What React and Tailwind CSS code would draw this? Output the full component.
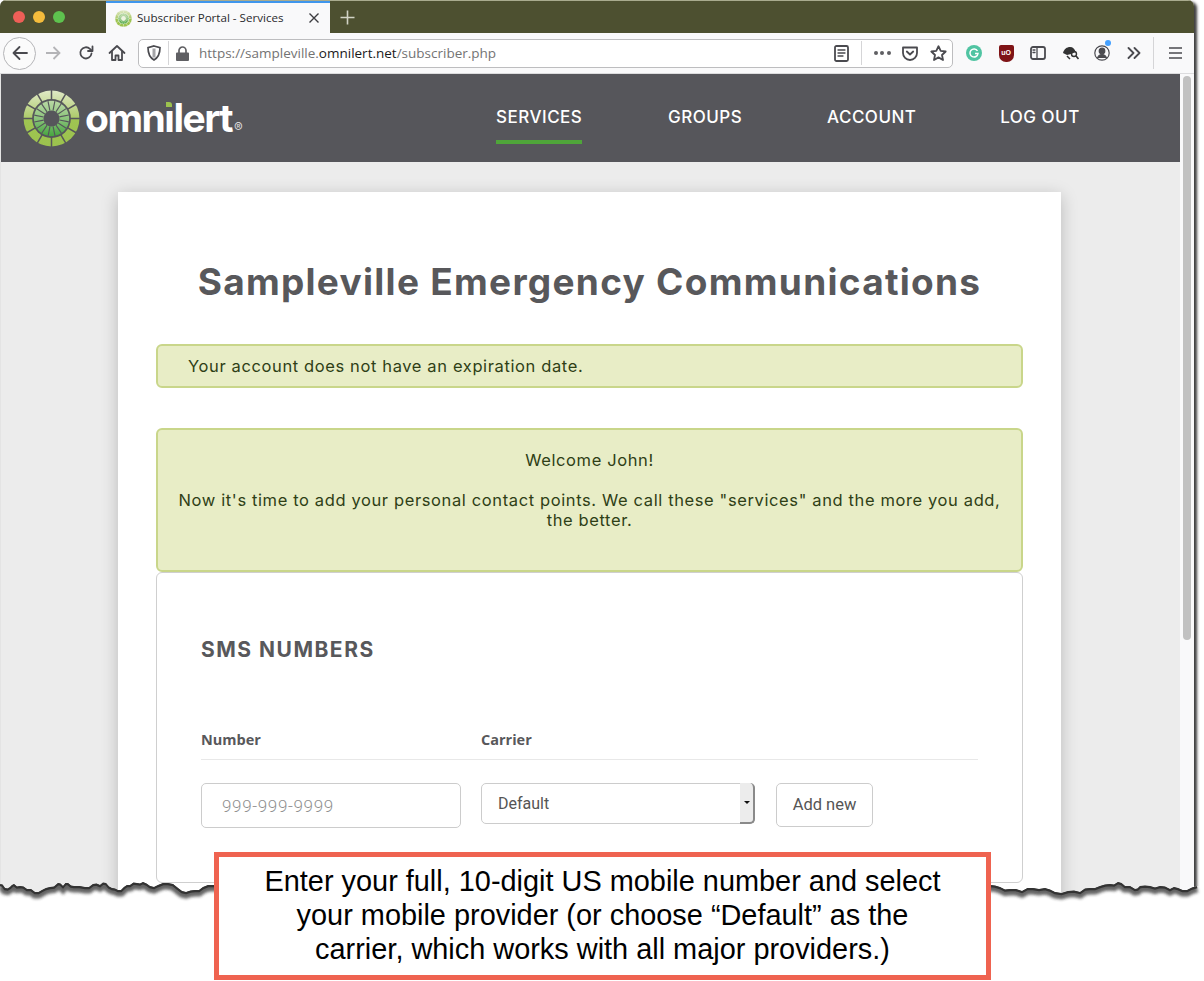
import React from 'react';

const TORN = [
  [0, 884], [5, 888], [10, 887], [14, 884], [20, 886], [27, 889], [35, 892], [42, 890], [50, 887], [58, 883],
  [63, 886], [68, 883], [74, 886], [85, 887], [93, 884], [100, 885], [106, 883], [112, 888], [118, 890],
  [124, 887], [130, 885], [137, 883], [143, 882], [150, 886], [158, 885], [168, 883], [178, 888], [186, 892],
  [195, 890], [203, 887], [213, 885], [600, 885], [990, 885], [1000, 887], [1010, 889], [1022, 891], [1033, 888],
  [1045, 888], [1055, 892], [1068, 891], [1080, 892], [1090, 888], [1100, 886], [1110, 884], [1118, 882],
  [1125, 886], [1135, 889], [1140, 886], [1150, 886], [1160, 886], [1170, 889], [1178, 888], [1187, 890], [1197, 886],
];
// small notches between the main points so the edge looks ripped
const JAG = [-1.5, 1, -0.5, 1.5, -1];
const tornLine = TORN.flatMap((p, i) => {
  const next = TORN[i + 1];
  if (!next || next[0] - p[0] > 30) return [p.join(',')];
  return [p.join(','), `${(p[0] + next[0]) / 2},${(p[1] + next[1]) / 2 + JAG[i % 5]}`];
}).join(' ');

const spokes = (n, r1, r2, offset = 0) =>
  Array.from({ length: n }, (_, i) => {
    const a = ((i * 360) / n + offset) * (Math.PI / 180);
    return [50 + r1 * Math.cos(a), 50 + r1 * Math.sin(a), 50 + r2 * Math.cos(a), 50 + r2 * Math.sin(a)];
  });

function LogoMark({ size, line = '#56565b', id = 'a' }) {
  return (
    <svg width={size} height={size} viewBox="0 0 100 100">
      <defs>
        <linearGradient id={`outer-${id}`} x1="0" y1="0" x2="0" y2="1">
          <stop offset="0" stopColor="#e0e9c6" />
          <stop offset="0.48" stopColor="#aecb6c" />
          <stop offset="0.52" stopColor="#9fc552" />
          <stop offset="1" stopColor="#9cc24e" />
        </linearGradient>
        <linearGradient id={`inner-${id}`} x1="0" y1="0" x2="0" y2="1">
          <stop offset="0" stopColor="#b9d8a4" />
          <stop offset="0.5" stopColor="#8cc47c" />
          <stop offset="1" stopColor="#46a53f" />
        </linearGradient>
      </defs>
      <circle cx="50" cy="50" r="49" fill={`url(#outer-${id})`} />
      <circle cx="50" cy="50" r="34" fill={line} />
      <circle cx="50" cy="50" r="31" fill={`url(#inner-${id})`} />
      {spokes(12, 32, 50, 0).map((s, i) => (
        <line key={i} x1={s[0]} y1={s[1]} x2={s[2]} y2={s[3]} stroke={line} strokeWidth="2.6" />
      ))}
      {spokes(16, 14, 31, 11).map((s, i) => (
        <line key={i} x1={s[0]} y1={s[1]} x2={s[2]} y2={s[3]} stroke={line} strokeWidth="2" />
      ))}
      <circle cx="50" cy="50" r="14" fill={line} />
    </svg>
  );
}

function Icon({ children, w = 18, h = 18, box = '0 0 18 18' }) {
  return (
    <svg width={w} height={h} viewBox={box} fill="none" stroke="#4a4a4f" strokeWidth="1.8" strokeLinecap="round" strokeLinejoin="round">
      {children}
    </svg>
  );
}

function BrowserChrome() {
  return (
    <>
      <div className="flex h-[33px] items-stretch border-t border-[#a9ab8e] bg-[#4d5030]">
        <div className="flex w-[106px] items-center gap-2 pl-[13px]">
          <span className="h-3 w-3 rounded-full bg-[#ee5f57]" />
          <span className="h-3 w-3 rounded-full bg-[#f4bc3c]" />
          <span className="h-3 w-3 rounded-full bg-[#5ec24e]" />
        </div>
        <div className="flex w-[224px] items-center border-t-2 border-[#3f96ec] bg-[#f9f9fa] pl-[9px]">
          <LogoMark size={17} line="#eef3e0" id="fav" />
          <span className="ml-[5px] w-[171px] whitespace-nowrap font-['Open_Sans',sans-serif] text-[11.6px] text-[#2a2a2e]">Subscriber Portal - Services</span>
          <svg width="12" height="12" viewBox="0 0 12 12" stroke="#3c3c40" strokeWidth="1.4">
            <path d="M1.5 1.5l9 9M10.5 1.5l-9 9" />
          </svg>
        </div>
        <div className="flex items-center pl-[10px]">
          <svg width="15" height="15" viewBox="0 0 15 15" stroke="#d2d3c5" strokeWidth="1.6">
            <path d="M7.5 0.5v14M0.5 7.5h14" />
          </svg>
        </div>
      </div>

      <div className="flex h-[41px] items-center border-b border-[#dcdcde] bg-[#f9f9fa]">
        <div className="ml-[3px] flex h-[33px] w-[33px] items-center justify-center rounded-full border border-[#b5b5b8] bg-[#fbfbfb]">
          <Icon>
            <path d="M16 9H2.5M8.5 3L2.5 9l6 6" />
          </Icon>
        </div>
        <div className="flex w-[34px] justify-center">
          <svg width="18" height="18" viewBox="0 0 18 18" fill="none" stroke="#b4b4b7" strokeWidth="1.8">
            <path d="M2 9h13.5M9.5 3l6 6-6 6" />
          </svg>
        </div>
        <div className="flex w-[32px] justify-center">
          <Icon>
            <path d="M14.5 9.5a5.6 5.6 0 1 1-1.6-4.6L15 7" />
            <path d="M15.5 2.5V7H11" />
          </Icon>
        </div>
        <div className="flex w-[30px] justify-center">
          <Icon>
            <path d="M1.5 9L9 2l7.5 7" />
            <path d="M4 7.5V16h3.5v-4.5h3V16H14V7.5" />
          </Icon>
        </div>
        <div className="ml-[6px] flex h-[29px] w-[815px] items-center rounded-[5px] border border-[#bdbdbf] bg-white">
          <div className="flex w-[29px] justify-center">
            <svg width="14" height="16" viewBox="0 0 14 16" fill="none" stroke="#4a4a4f" strokeWidth="1.7">
              <path d="M7 1l6 1.6c0 6-1.5 10-6 12.4C2.500 12.600 1 8.600 1 2.600z" />
              <path d="M7 3.500v9" strokeWidth="3" stroke="#4a4a4f" opacity="0.5" />
            </svg>
          </div>
          <div className="h-[24px] w-px bg-[#d5d5d7]" />
          <div className="flex w-[27px] justify-center">
            <svg width="13" height="15" viewBox="0 0 13 15" fill="#5f5f63">
              <path d="M1 6.500h11a1 1 0 0 1 1 1V14a1 1 0 0 1-1 1H1a1 1 0 0 1-1-1V7.500a1 1 0 0 1 1-1z" />
              <path d="M3 7V4.500a3.500 3.500 0 0 1 7 0V7" fill="none" stroke="#5f5f63" strokeWidth="1.700" />
            </svg>
          </div>
          <div className="w-[629px] whitespace-nowrap pl-[3px] font-['Open_Sans',sans-serif] text-[13.5px] text-[#737373]">
            https://sampleville.<span className="text-[#1a1a1a]">omnilert.net</span>/subscriber.php
          </div>
          <div className="mr-[4px] flex w-[32px] justify-center">
            <Icon w={15} h={17} box="0 0 15 17">
              <rect x="1" y="1" width="13" height="15" rx="1.500" />
              <path d="M4 5h7M4 8h7M4 11h5" strokeWidth="1.300" />
            </Icon>
          </div>
          <div className="h-[24px] w-px bg-[#d5d5d7]" />
          <div className="flex w-[40px] justify-center gap-[2.500px]">
            <span className="h-[4px] w-[4px] rounded-full bg-[#5f5f63]" />
            <span className="h-[4px] w-[4px] rounded-full bg-[#5f5f63]" />
            <span className="h-[4px] w-[4px] rounded-full bg-[#5f5f63]" />
          </div>
          <div className="flex w-[16px] justify-center">
            <Icon w={16} h={15} box="0 0 16 15">
              <path d="M1 1.500h14V7a7 7 0 0 1-14 0z" />
              <path d="M4.800 5.500L8 8.500l3.200-3" />
            </Icon>
          </div>
          <div className="ml-[6px] flex w-[28px] justify-center">
            <Icon w={17} h={16} box="0 0 17 16">
              <path d="M8.500 1.200l2.200 4.700 5 .6-3.700 3.500 1 5-4.500-2.600L4 15l1-5L1.300 6.500l5-.6z" />
            </Icon>
          </div>
        </div>

        <div className="ml-[5px] flex w-[32px] justify-center">
          <span className="flex h-[16px] w-[16px] items-center justify-center rounded-full bg-[#50c4a2]">
            <svg width="10" height="10" viewBox="0 0 10 10" fill="none" stroke="#fff" strokeWidth="1.500">
              <path d="M8.500 3A4 4 0 1 0 9 5.500H6" />
            </svg>
          </span>
        </div>
        <div className="flex w-[32px] justify-center">
          <span className="flex h-[17px] w-[15px] items-center justify-center rounded-b-[7px] rounded-t-[2px] bg-[#7f1416] font-['Liberation_Sans',sans-serif] text-[7px] font-bold text-white">
            uO
          </span>
        </div>
        <div className="flex w-[32px] justify-center">
          <Icon w={16} h={14} box="0 0 16 14">
            <rect x="1" y="1" width="14" height="12" rx="2" />
            <path d="M7 1v12M3 4h2M3 6.500h2" strokeWidth="1.300" />
          </Icon>
        </div>
        <div className="flex w-[32px] justify-center">
          <svg width="17" height="14" viewBox="0 0 17 14" fill="#333">
            <path d="M1 7c1-4 4-6 7-6s5 2 5.500 5L9 8 5 9z" />
            <circle cx="12" cy="8" r="2.500" fill="none" stroke="#333" strokeWidth="1.400" />
            <path d="M14 10l2.500 3" stroke="#333" strokeWidth="1.600" />
            <path d="M5 10l3 3" stroke="#333" strokeWidth="1.500" />
          </svg>
        </div>
        <div className="relative flex w-[32px] justify-center">
          <svg width="16" height="16" viewBox="0 0 16 16" fill="none" stroke="#4a4a4f" strokeWidth="1.200">
            <circle cx="8" cy="8" r="7.200" />
            <circle cx="8" cy="6" r="2.800" fill="#4a4a4f" />
            <path d="M3.500 13c.8-2.500 2.500-3.500 4.500-3.500s3.700 1 4.500 3.500" fill="#4a4a4f" />
          </svg>
          <span className="absolute left-[19px] top-[-5px] h-[6px] w-[6px] rounded-full bg-[#45a1ff]" />
        </div>
        <div className="flex w-[32px] justify-center">
          <Icon w={14} h={12} box="0 0 14 12">
            <path d="M1.500 1l5 5-5 5M7.500 1l5 5-5 5" />
          </Icon>
        </div>
        <div className="ml-[3px] h-[32px] w-px bg-[#d5d5d7]" />
        <div className="flex w-[39px] justify-center pl-[3px]">
          <svg width="13" height="12" viewBox="0 0 13 12" stroke="#4a4a4f" strokeWidth="1.700">
            <path d="M0 1h13M0 6h13M0 11h13" />
          </svg>
        </div>
      </div>
    </>
  );
}

function SiteHeader() {
  const navItem = "relative font-['Inter',sans-serif] text-[17px] font-medium tracking-[0.5px] text-white";
  return (
    <div className="flex h-[88px] items-center bg-[#56565b]">
      <div className="ml-[22px] flex w-[473px] items-center">
        <LogoMark size={57} />
        <div className="ml-[5px] mt-[-2px] flex items-end font-['Inter',sans-serif] text-[39px] font-bold leading-none tracking-[-1.5px] text-white">
          <span>omn</span>
          <span className="relative">
            ı<span className="absolute left-[2px] top-[4px] h-[5px] w-[6px] rounded-tr-[3px] bg-[#9cc24e]" />
          </span>
          <span>lert</span>
          <span className="mb-[3px] ml-[2px] text-[13px] font-normal tracking-normal text-[#d9d9d9]">®</span>
        </div>
      </div>
      <div className="flex">
        <div className="relative mr-[86px] w-[86px] text-center">
          <span className={navItem}>SERVICES</span>
          <span className="absolute bottom-[-13px] left-0 h-[4px] w-[86px] bg-[#4fa53a]" />
        </div>
        <div className="mr-[85px] w-[74px] text-center"><span className={navItem}>GROUPS</span></div>
        <div className="mr-[85px] w-[88px] text-center"><span className={navItem}>ACCOUNT</span></div>
        <div className="w-[80px] text-center"><span className={navItem}>LOG OUT</span></div>
      </div>
    </div>
  );
}

function SmsCard() {
  return (
    <div className="h-[311px] rounded-[6px] border border-[#cfcfcf] px-[44px] pt-[63px]">
      <h2 className="font-['Inter',sans-serif] text-[21px] font-bold leading-[28px] tracking-[1.5px] text-[#58585b]">SMS NUMBERS</h2>
      <div className="mt-[65px] flex h-[31px] border-b border-[#e8e8e8] font-['Open_Sans',sans-serif] text-[14.5px] font-bold leading-[22px] text-[#58585b]">
        <div className="w-[280px]">Number</div>
        <div>Carrier</div>
      </div>
      <div className="mt-[23px] flex items-start font-['Roboto',sans-serif] text-[16px]">
        <div className="flex h-[45px] w-[260px] items-center rounded-[5px] border border-[#cccccc] pl-[20px] pt-[2px] text-[17px] font-light tracking-[0.65px] text-[#8f8f8f]">999-999-9999</div>
        <div className="relative ml-[20px] flex h-[41px] w-[274px] items-center rounded-[5px] border border-[#cccccc] pl-[16px] pt-[1px] text-[#555]">
          Default
          <div className="absolute right-[-1px] top-[-1px] flex h-[41px] w-[15px] items-center justify-center rounded-r-[5px] border-b-2 border-r-2 border-[#8a8a8a] bg-[#ececec]">
            <span className="h-0 w-0 border-x-[3px] border-t-[3px] border-x-transparent border-t-[#111]" />
          </div>
        </div>
        <div className="ml-[21px] flex h-[44px] w-[97px] items-center justify-center rounded-[5px] border border-[#cccccc] pt-[1px] text-[16.5px] text-[#555]">Add new</div>
      </div>
    </div>
  );
}

export default function App() {
  return (
    <div className="relative h-[981px] w-[1204px] overflow-hidden bg-white">
      {/* browser window, cut off by the torn edge below */}
      <div className="h-[900px] w-[1194px] overflow-hidden rounded-t-[6px] bg-[#f9f9fa] shadow-[3px_2px_3px_rgba(40,40,40,0.9)]">
        <BrowserChrome />
        <div className="flex">
          <div className="w-[1180px] border-l border-[#e4e4e4]">
            <SiteHeader />
            <div className="h-[760px] bg-[#ececec] pl-[117px] pt-[30px]">
              <div className="h-[730px] w-[943px] bg-white px-[38px] shadow-[0_4px_16px_rgba(0,0,0,0.22)]">
                <h1 className="whitespace-nowrap pt-[65px] text-center font-['Inter',sans-serif] text-[37px] font-bold leading-[50px] tracking-[1.28px] text-[#58585b]">
                  Sampleville Emergency Communications
                </h1>
                <div className="mt-[37px] flex h-[44px] items-center rounded-[6px] border-2 border-[#c9d68a] bg-[#e8edc6] pl-[30px] font-['Inter',sans-serif] text-[16.5px] tracking-[0.62px] text-[#2f3f16]">
                  Your account does not have an expiration date.
                </div>
                <div className="mt-[40px] h-[144px] rounded-[6px] border-2 border-[#c9d68a] bg-[#e8edc6] px-[14px] pt-[20px] text-center font-['Inter',sans-serif] text-[16.5px] leading-[20px] tracking-[0.62px] text-[#2f3f16]">
                  <p>Welcome John!</p>
                  <p className="mt-[20px]">Now it's time to add your personal contact points. We call these "services" and the more you add, the better.</p>
                </div>
                <SmsCard />
              </div>
            </div>
          </div>
          <div className="w-[13px] pl-[3px] pt-[2px]">
            <div className="h-[564px] w-[8px] rounded-full bg-[#c1c1c1]" />
          </div>
        </div>
      </div>

      {/* torn paper edge */}
      <svg className="absolute left-0 top-0" width="1204" height="981" viewBox="0 0 1204 981">
        <defs>
          <clipPath id="below-edge">
            <polygon points={`${tornLine} 1204,886 1204,981 0,981`} />
          </clipPath>
          <filter id="soft" x="-5%" y="-500%" width="110%" height="1100%">
            <feGaussianBlur stdDeviation="1.800" />
          </filter>
        </defs>
        <polygon points={`${tornLine} 1204,886 1204,981 0,981`} fill="#fff" />
        <g clipPath="url(#below-edge)">
          <polyline points={tornLine} fill="none" stroke="#222" strokeWidth="9" opacity="0.7" filter="url(#soft)" transform="translate(0 2)" />
          <polyline points={tornLine} fill="none" stroke="#333" strokeWidth="2.500" transform="translate(0 1)" />
        </g>
      </svg>

      {/* annotation */}
      <div className="absolute left-[214px] top-[852px] flex h-[128px] w-[777px] items-center justify-center border-[5px] border-[#ef6350] bg-white pb-[3px] text-center font-['Liberation_Sans',sans-serif] text-[28.9px] leading-[34px] text-black">
        <p>
          Enter your full, 10-digit US mobile number and select
          <br />
          your mobile provider (or choose “Default” as the
          <br />
          carrier, which works with all major providers.)
        </p>
      </div>
    </div>
  );
}
